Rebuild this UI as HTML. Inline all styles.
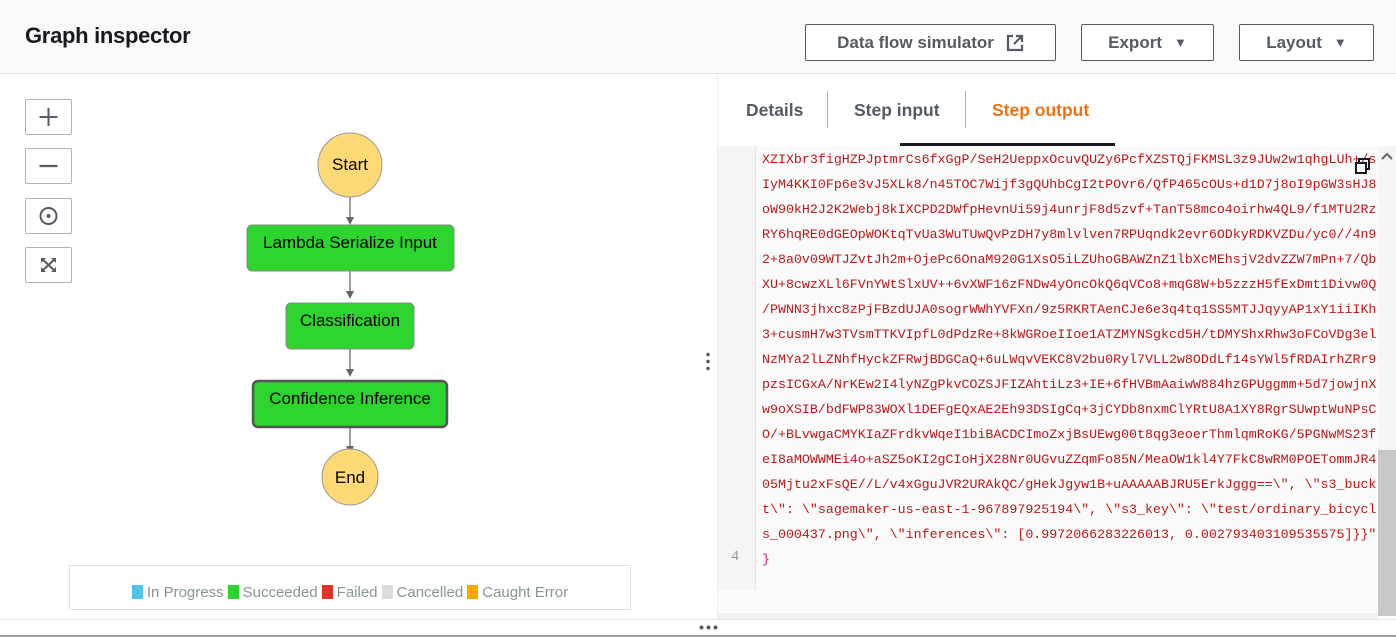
<!DOCTYPE html>
<html><head><meta charset="utf-8"><style>
*{margin:0;padding:0;box-sizing:border-box}
body{width:1396px;height:637px;overflow:hidden;font-family:"Liberation Sans",sans-serif;background:#fff;position:relative}
.hdr{position:absolute;left:0;top:0;width:1396px;height:74px;background:#fafafa;border-bottom:1px solid #e4e4e4}
.hdr h1{position:absolute;left:25px;top:23px;font-size:22px;font-weight:bold;color:#16191f;letter-spacing:-0.3px}
.btn{position:absolute;top:24px;height:37px;border:1px solid #545b64;border-radius:2px;background:#fff;color:#545b64;font-weight:bold;font-size:17px;display:flex;align-items:center;justify-content:center;gap:12px}
.ctl{position:absolute;left:25px;width:47px;height:36px;border:1px solid #aab7b8;border-radius:2px;background:#fff}
.tab{position:absolute;top:100px;font-size:17.5px;font-weight:bold;color:#545b64}
.code{position:absolute;left:762px;top:147px;width:616px;height:460px;overflow:hidden;font-family:"Liberation Mono",monospace;font-size:13.3px;color:#b8181a;white-space:pre;line-height:25px;padding-top:0}
</style></head><body>
<div class="hdr"><h1>Graph inspector</h1>
<div class="btn" style="left:805px;width:251px">Data flow simulator <svg width="18" height="18" viewBox="0 0 18 18"><path d="M7 2H2v14h14v-5" fill="none" stroke="#545b64" stroke-width="2.2"/><path d="M10 2h6v6M16 2L8 10" fill="none" stroke="#545b64" stroke-width="2.2"/></svg></div>
<div class="btn" style="left:1081px;width:133px">Export <span style="font-size:13px">▼</span></div>
<div class="btn" style="left:1239px;width:135px">Layout <span style="font-size:13px">▼</span></div>
</div>
<div class="ctl" style="top:99px"><svg width="45" height="34"><path d="M22.5 8v18M13.5 17h18" stroke="#545b64" stroke-width="2"/></svg></div>
<div class="ctl" style="top:148px"><svg width="45" height="34"><path d="M13.5 17h18" stroke="#545b64" stroke-width="2.2"/></svg></div>
<div class="ctl" style="top:198px"><svg width="45" height="34"><circle cx="22.5" cy="17" r="8" fill="none" stroke="#545b64" stroke-width="2"/><circle cx="22.5" cy="17" r="2" fill="#545b64"/></svg></div>
<div class="ctl" style="top:247px"><svg width="45" height="34"><path d="M15 10h5l-5 5zM30 10h-5l5 5zM15 24h5l-5-5zM30 24h-5l5-5z" fill="#545b64"/><path d="M16 11l13 12M29 11L16 23" stroke="#545b64" stroke-width="2"/></svg></div>
<svg style="position:absolute;left:0;top:74px" width="700" height="470">
<g stroke="#666" stroke-width="1.3"><path d="M350 123v20M350 197v20M350 275v20M350 352v20"/></g>
<g fill="#666"><path d="M346 143h8l-4 8zM346 217h8l-4 8zM346 295h8l-4 8zM346 372h8l-4 8z"/></g>
<ellipse cx="350" cy="91" rx="32" ry="32" fill="#ffd976" stroke="#999"/>
<rect x="247" y="151" width="207" height="46" rx="5" fill="#2dd42d" stroke="#888"/>
<rect x="286" y="229" width="128" height="46" rx="5" fill="#2dd42d" stroke="#888"/>
<rect x="253" y="307" width="194" height="46" rx="5" fill="#2dd42d" stroke="#555" stroke-width="2.5"/>
<circle cx="350" cy="403" r="28" fill="#ffd976" stroke="#999"/>
<g font-family="Liberation Sans" font-size="17" fill="#000" text-anchor="middle">
<text x="350" y="96">Start</text><text x="350" y="174">Lambda Serialize Input</text><text x="350" y="252">Classification</text><text x="350" y="330">Confidence Inference</text><text x="350" y="409">End</text></g>
</svg>
<div style="position:absolute;left:69px;top:565px;width:562px;height:45px;border:1px solid #e0e0e0;display:flex;align-items:center;justify-content:center;gap:4px;font-size:15px;color:#879596;padding-top:9px">
<span style="width:11px;height:14px;background:#4cc4ec"></span>In Progress <span style="width:11px;height:14px;background:#2dd42d"></span>Succeeded <span style="width:11px;height:14px;background:#e0322c"></span>Failed <span style="width:11px;height:14px;background:#ddd"></span>Cancelled <span style="width:11px;height:14px;background:#ffa500"></span>Caught Error</div>
<div style="position:absolute;left:700px;top:74px;width:18px;height:545px;background:#fff;border-right:1px solid #eee"></div>
<div style="position:absolute;left:706px;top:351px;width:4px;height:20px;background:radial-gradient(circle,#545b64 1.6px,transparent 2px) 0 0/4px 7px"></div>
<div class="tab" style="left:746px">Details</div>
<div style="position:absolute;left:827px;top:91px;width:1px;height:37px;background:#aab7b8"></div>
<div class="tab" style="left:854px">Step input</div>
<div style="position:absolute;left:965px;top:91px;width:1px;height:37px;background:#aab7b8"></div>
<div class="tab" style="left:992px;color:#ec7211">Step output</div>
<div style="position:absolute;left:900px;top:143px;width:215px;height:3px;background:#16191f"></div>
<div style="position:absolute;left:718px;top:146px;width:678px;height:470px;background:#fafafa"></div>
<div style="position:absolute;left:718px;top:146px;width:38px;height:444px;background:#f5f5f5;border-right:1px solid #e4e4e4"></div>
<div style="position:absolute;left:731px;top:549px;font-size:14px;color:#999;font-family:'Liberation Mono',monospace">4</div>
<div class="code">XZIXbr3figHZPJptmrCs6fxGgP/SeH2UeppxOcuvQUZy6PcfXZSTQjFKMSL3z9JUw2w1qhgLUh+/s
IyM4KKI0Fp6e3vJ5XLk8/n45TOC7Wijf3gQUhbCgI2tPOvr6/QfP465cOUs+d1D7j8oI9pGW3sHJ8
oW90kH2J2K2Webj8kIXCPD2DWfpHevnUi59j4unrjF8d5zvf+TanT58mco4oirhw4QL9/f1MTU2Rz
RY6hqRE0dGEOpWOKtqTvUa3WuTUwQvPzDH7y8mlvlven7RPUqndk2evr6ODkyRDKVZDu/yc0//4n9
2+8a0v09WTJZvtJh2m+OjePc6OnaM920G1XsO5iLZUhoGBAWZnZ1lbXcMEhsjV2dvZZW7mPn+7/Qb
XU+8cwzXLl6FVnYWtSlxUV++6vXWF16zFNDw4yOncOkQ6qVCo8+mqG8W+b5zzzH5fExDmt1Divw0Q
/PWNN3jhxc8zPjFBzdUJA0sogrWWhYVFXn/9z5RKRTAenCJe6e3q4tq1SS5MTJJqyyAP1xY1iiIKh
3+cusmH7w3TVsmTTKVIpfL0dPdzRe+8kWGRoeIIoe1ATZMYNSgkcd5H/tDMYShxRhw3oFCoVDg3el
NzMYa2lLZNhfHyckZFRwjBDGCaQ+6uLWqvVEKC8V2bu0Ryl7VLL2w8ODdLf14sYWl5fRDAIrhZRr9
pzsICGxA/NrKEw2I4lyNZgPkvCOZSJFIZAhtiLz3+IE+6fHVBmAaiwW884hzGPUggmm+5d7jowjnX
w9oXSIB/bdFWP83WOXl1DEFgEQxAE2Eh93DSIgCq+3jCYDb8nxmClYRtU8A1XY8RgrSUwptWuNPsC
O/+BLvwgaCMYKIaZFrdkvWqeI1biBACDCImoZxjBsUEwg00t8qg3eoerThmlqmRoKG/5PGNwMS23f
eI8aMOWWMEi4o+aSZ5oKI2gCIoHjX28Nr0UGvuZZqmFo85N/MeaOW1kl4Y7FkC8wRM0POETommJR4
05Mjtu2xFsQE//L/v4xGguJVR2URAkQC/gHekJgyw1B+uAAAAABJRU5ErkJggg==\", \"s3_buck
t\": \"sagemaker-us-east-1-967897925194\", \"s3_key\": \"test/ordinary_bicycl
s_000437.png\", \"inferences\": [0.9972066283226013, 0.002793403109535575]}}"
<span style="color:#e0179a">}</span></div>
<svg style="position:absolute;left:1355px;top:158px" width="16" height="16"><rect x="4" y="1" width="10" height="10" fill="none" stroke="#16191f" stroke-width="2"/><rect x="1" y="5" width="10" height="10" fill="#fff" stroke="#16191f" stroke-width="2"/></svg>
<div style="position:absolute;left:1378px;top:146px;width:18px;height:470px;background:#f5f5f5"></div>
<div style="position:absolute;left:1378px;top:450px;width:18px;height:166px;background:#c8c8c8"></div>
<svg style="position:absolute;left:1381px;top:152px" width="12" height="8"><path d="M1 7l5-5 5 5" fill="none" stroke="#666" stroke-width="2"/></svg>
<div style="position:absolute;left:718px;top:613px;width:660px;height:6px;background:#f0f0f0"></div>
<div style="position:absolute;left:0;top:619px;width:1396px;height:1px;background:#e4e4e4"></div>
<div style="position:absolute;left:698px;top:625px;width:20px;height:5px;background:radial-gradient(circle,#545b64 1.8px,transparent 2.2px) 0 0/7px 5px"></div>
<div style="position:absolute;left:0;top:635px;width:1396px;height:2px;background:#95a5a6"></div>
</body></html>
